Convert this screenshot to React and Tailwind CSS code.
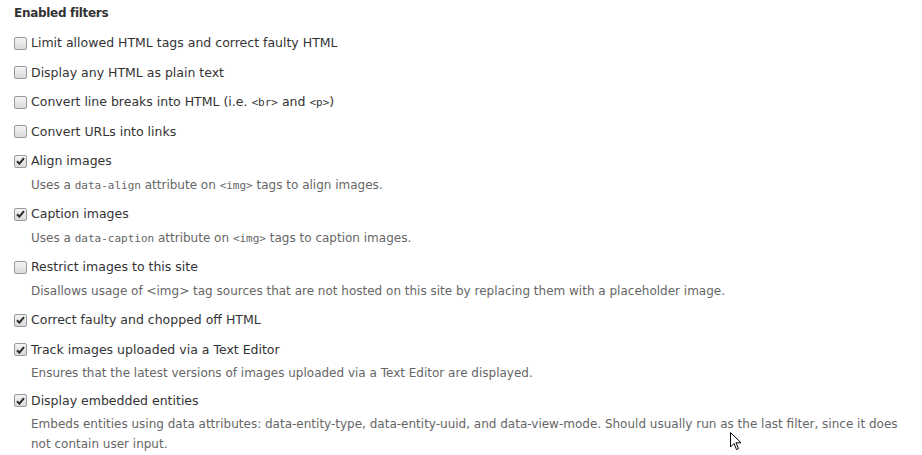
import React from 'react';

function Code({ children }) {
    return <code className="font-['DejaVu_Sans_Mono',monospace] text-[11px] leading-none">{children}</code>;
}

const filters = [
    { label: 'Limit allowed HTML tags and correct faulty HTML', checked: false },
    { label: 'Display any HTML as plain text', checked: false },
    {
        label: <>Convert line breaks into HTML (i.e. <Code>&lt;br&gt;</Code> and <Code>&lt;p&gt;</Code>)</>,
        checked: false,
    },
    { label: 'Convert URLs into links', checked: false },
    {
        label: 'Align images',
        checked: true,
        desc: <>Uses a <Code>data-align</Code> attribute on <Code>&lt;img&gt;</Code> tags to align images.</>,
    },
    {
        label: 'Caption images',
        checked: true,
        desc: <>Uses a <Code>data-caption</Code> attribute on <Code>&lt;img&gt;</Code> tags to caption images.</>,
    },
    {
        label: 'Restrict images to this site',
        checked: false,
        desc: 'Disallows usage of <img> tag sources that are not hosted on this site by replacing them with a placeholder image.',
    },
    { label: 'Correct faulty and chopped off HTML', checked: true },
    {
        label: 'Track images uploaded via a Text Editor',
        checked: true,
        desc: 'Ensures that the latest versions of images uploaded via a Text Editor are displayed.',
    },
    {
        label: 'Display embedded entities',
        checked: true,
        desc: 'Embeds entities using data attributes: data-entity-type, data-entity-uuid, and data-view-mode. Should usually run as the last filter, since it does not contain user input.',
    },
];

function Checkbox({ checked }) {
    return (
        <span className="flex h-[13px] w-[13px] shrink-0 items-center justify-center rounded-[2px] border border-[#9a9a9a] bg-gradient-to-b from-[#f4f4f4] to-[#d9d9d9]">
            {checked && (
                <svg width="9" height="8" viewBox="0 0 9 8">
                    <path d="M1 4.2 L3.4 6.6 L8 1.2" fill="none" stroke="#2a2a2a" strokeWidth="2" />
                </svg>
            )}
        </span>
    );
}

export default function App() {
    return (
        <div className="relative h-[455px] w-[922px] overflow-hidden bg-white pl-[14px] pr-[14px] pt-[3px] font-['DejaVu_Sans',sans-serif] text-[#333]">
            <h3 className="text-[12px] font-bold leading-[20px] tracking-[-0.3px]">Enabled filters</h3>
            <div className="mt-[10px] flex flex-col gap-[9.5px]">
                {filters.map((f, i) => (
                    <div key={i} className="last:-mt-[2px]">
                        <label className="flex h-[20px] items-center text-[12.5px] leading-[20px]">
                            <Checkbox checked={f.checked} />
                            <span className="ml-[4px]">{f.label}</span>
                        </label>
                        {f.desc && (
                            <div className="mt-[3.5px] pl-[17px] text-[12px] leading-[20px] text-[#666]">{f.desc}</div>
                        )}
                    </div>
                ))}
            </div>
            <svg className="absolute left-[730px] top-[432px]" width="12" height="19" viewBox="0 0 12 19">
                <path d="M0.5 0.5 L0.5 15 L4 11.5 L6.5 17.5 L8.5 16.6 L6 10.8 L11 10.8 Z" fill="white" stroke="black" strokeWidth="1" />
            </svg>
        </div>
    );
}
